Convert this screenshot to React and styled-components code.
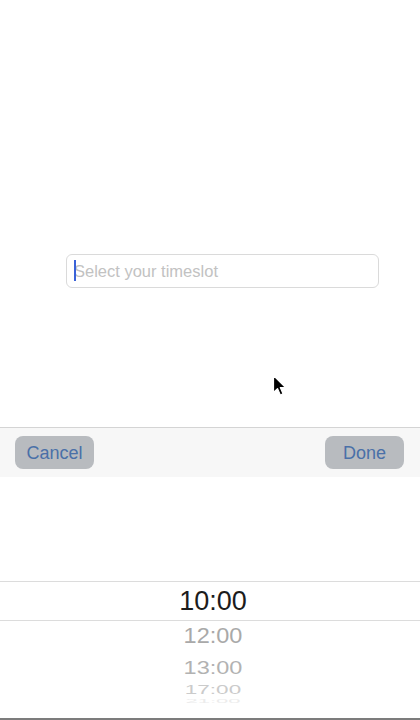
import React from "react";
import styled, { createGlobalStyle } from "styled-components";

const Global = createGlobalStyle`
  html, body { margin: 0; padding: 0; background: #fff; }
  body { font-family: "Liberation Sans", Arial, sans-serif; }
`;

const Page = styled.div`
  position: relative;
  width: 420px;
  height: 720px;
  display: flex;
  flex-direction: column;
  overflow: hidden;
  background: #fff;
`;

const Top = styled.div`
  height: 427px;
  padding-top: 254px;
  box-sizing: border-box;
  display: flex;
  justify-content: flex-start;
  padding-left: 66px;
`;

const Field = styled.div`
  position: relative;
  width: 313px;
  height: 34px;
  box-sizing: border-box;
  border: 1px solid #dadada;
  border-radius: 6px;
  display: flex;
  align-items: center;
  padding-left: 7px;
`;

const Placeholder = styled.span`
  font-size: 16.5px;
  color: #c2c2c2;
`;

const Caret = styled.span`
  position: absolute;
  left: 7px;
  top: 5px;
  width: 2px;
  height: 21px;
  background: #3a62d8;
`;

const Toolbar = styled.div`
  height: 50px;
  box-sizing: border-box;
  border-top: 1px solid #d4d4d4;
  background: #f7f7f7;
  display: flex;
  align-items: center;
  justify-content: space-between;
  padding: 0 16px 0 15px;
`;

const Button = styled.button`
  width: 79px;
  height: 33px;
  border: none;
  border-radius: 8px;
  background: #b8bbbf;
  color: #4a70a8;
  font-family: "Liberation Sans", Arial, sans-serif;
  font-size: 18px;
  padding: 2px 0 0;
  display: flex;
  align-items: center;
  justify-content: center;
`;

const Picker = styled.div`
  height: 243px;
  box-sizing: border-box;
  border-bottom: 2px solid #7c7c7c;
  display: flex;
  flex-direction: column;
  background: #fff;
  overflow: hidden;
`;

const Spacer = styled.div`
  height: 104px;
  flex-shrink: 0;
`;

const Selected = styled.div`
  height: 40px;
  flex-shrink: 0;
  box-sizing: border-box;
  border-top: 1px solid #dcdcdc;
  border-bottom: 1px solid #dcdcdc;
  display: flex;
  align-items: center;
  justify-content: center;
  font-size: 27px;
  color: #1c1c1c;
  padding-left: 6px;
`;

const Item = styled.div`
  height: ${(p) => p.$h}px;
  flex-shrink: 0;
  display: flex;
  align-items: center;
  justify-content: center;
  font-size: ${(p) => p.$size}px;
  color: ${(p) => p.$color};
  transform: scaleY(${(p) => p.$sy});
  line-height: 1;
  padding-left: 6px;
`;

const Cursor = styled.svg`
  position: absolute;
  left: 272px;
  top: 374px;
`;

const rows = [
  { t: "12:00", h: 32, size: 23.5, color: "#a9a9a9", sy: 0.92 },
  { t: "13:00", h: 30, size: 23.5, color: "#b2b2b2", sy: 0.8 },
  { t: "17:00", h: 14, size: 22.5, color: "#cbcbcb", sy: 0.55 },
  { t: "21:00", h: 8, size: 22, color: "#ececec", sy: 0.25 },
];

export default function App() {
  return (
    <>
      <Global />
      <Page>
        <Top>
          <Field>
            <Caret />
            <Placeholder>Select your timeslot</Placeholder>
          </Field>
        </Top>
        <Toolbar>
          <Button>Cancel</Button>
          <Button>Done</Button>
        </Toolbar>
        <Picker>
          <Spacer />
          <Selected>10:00</Selected>
          {rows.map((r) => (
            <Item key={r.t} $h={r.h} $size={r.size} $color={r.color} $sy={r.sy}>
              {r.t}
            </Item>
          ))}
        </Picker>
        <Cursor width="17" height="24" viewBox="0 0 17 24">
          <path
            d="M1.5 1.5 L1.5 18.5 L5.5 14.6 L8.3 21 L11 19.8 L8.3 13.6 L13.6 13.6 Z"
            fill="#000"
            stroke="#fff"
            strokeWidth="1.2"
            strokeLinejoin="round"
          />
        </Cursor>
      </Page>
    </>
  );
}
